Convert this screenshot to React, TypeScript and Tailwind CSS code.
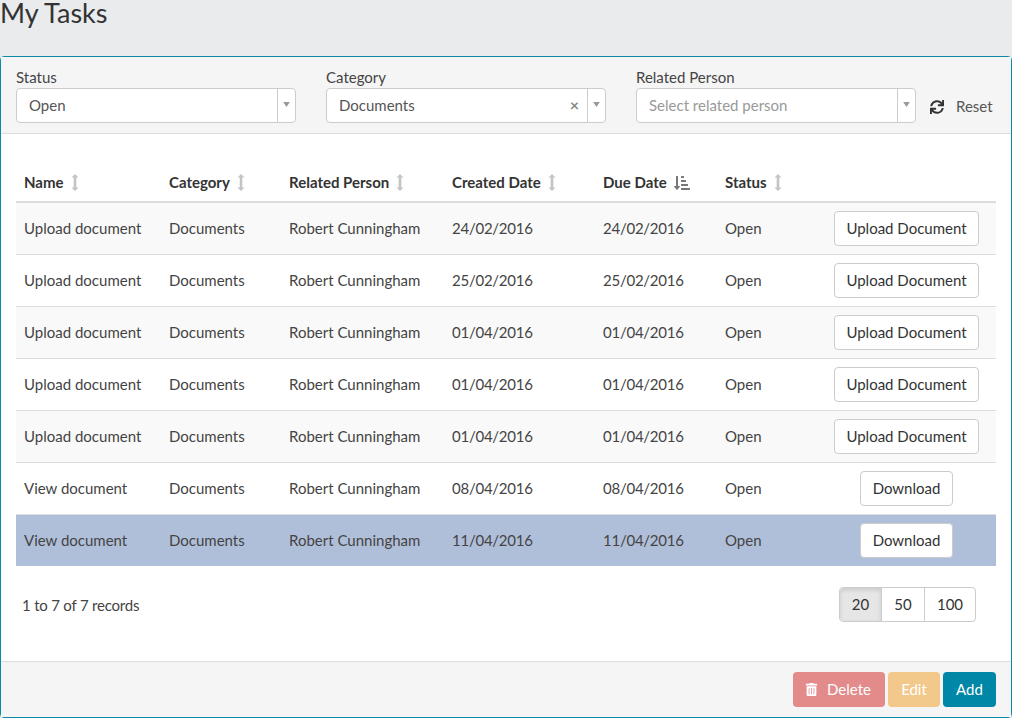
import { FaSortAmountDownAlt, FaSync, FaTrashAlt } from "react-icons/fa";

const rows = [
  { name: "Upload document", created: "24/02/2016", due: "24/02/2016", action: "Upload Document" },
  { name: "Upload document", created: "25/02/2016", due: "25/02/2016", action: "Upload Document" },
  { name: "Upload document", created: "01/04/2016", due: "01/04/2016", action: "Upload Document" },
  { name: "Upload document", created: "01/04/2016", due: "01/04/2016", action: "Upload Document" },
  { name: "Upload document", created: "01/04/2016", due: "01/04/2016", action: "Upload Document" },
  { name: "View document", created: "08/04/2016", due: "08/04/2016", action: "Download" },
  { name: "View document", created: "11/04/2016", due: "11/04/2016", action: "Download" },
];

function SortIcon() {
  return (
    <svg width="8" height="17" viewBox="0 0 8 17" className="ml-[7px] inline-block align-[-3px]" fill="#c4c4c4">
      <path d="M4 0 L7.5 3.5 H5.3 V13.5 H7.5 L4 17 L0.5 13.5 H2.7 V3.5 H0.5 Z" />
    </svg>
  );
}

function Caret() {
  return (
    <div className="flex w-[18px] items-center justify-center self-stretch border-l border-[#ccc]">
      <svg width="7" height="5" viewBox="0 0 8 6" fill="#999" className="-mt-[2px]">
        <path d="M0 0 H8 L4 6 Z" />
      </svg>
    </div>
  );
}

function Select({ label, value, placeholder, clearable }: { label: string; value?: string; placeholder?: string; clearable?: boolean }) {
  return (
    <div className="w-[280px]">
      <div className="h-[21px] leading-[21px] text-[#444]">{label}</div>
      <div className="flex h-[35px] items-center rounded-[4px] border border-[#ccc] bg-white">
        <span className={`flex-1 pl-[12px] ${value ? "text-[#555]" : "text-[#999]"}`}>{value ?? placeholder}</span>
        {clearable && <span className="mr-[8px] -mt-[2px] text-[16px] font-bold leading-none text-[#888]">×</span>}
        <Caret />
      </div>
    </div>
  );
}

export default function App() {
  return (
    <div className="h-[718px] w-[1012px] overflow-hidden bg-[#e9ebed] font-['Lato','Open_Sans',sans-serif] text-[15px] leading-[21px] text-[#444]">
      <h1 className="h-[56px] text-[27px] leading-[26px] text-[#333]">My Tasks</h1>

      <div className="flex h-[662px] flex-col rounded-[4px] border border-[#0a8ba6] bg-white">
        {/* Filters */}
        <div className="flex h-[77px] gap-[30px] border-b border-[#ddd] bg-[#f5f5f5] pl-[15px] pt-[10px]">
          <Select label="Status" value="Open" />
          <Select label="Category" value="Documents" clearable />
          <div className="flex">
            <Select label="Related Person" placeholder="Select related person" />
            <div className="ml-[14px] mt-[29px] flex h-[21px] items-center text-[#555]">
              <FaSync className="text-[14px] text-[#333]" />
              <span className="ml-[12px]">Reset</span>
            </div>
          </div>
        </div>

        {/* Table */}
        <div className="flex-1 px-[15px] pt-[30px]">
          <table className="w-[980px] table-fixed border-collapse">
            <thead>
              <tr className="h-[38px] border-b-2 border-[#ddd] text-left text-[#333]">
                <th className="w-[145px] px-[8px] font-bold">Name<SortIcon /></th>
                <th className="w-[120px] px-[8px] font-bold">Category<SortIcon /></th>
                <th className="w-[163px] px-[8px] font-bold">Related Person<SortIcon /></th>
                <th className="w-[151px] px-[8px] font-bold">Created Date<SortIcon /></th>
                <th className="w-[122px] px-[8px] font-bold">
                  Due Date
                  <FaSortAmountDownAlt className="ml-[7px] inline-block align-[-3px] text-[16px] text-[#777]" />
                </th>
                <th className="w-[100px] px-[8px] font-bold">Status<SortIcon /></th>
                <th />
              </tr>
            </thead>
            <tbody>
              {rows.map((row, index) => (
                <tr
                  key={index}
                  className={`h-[52px] border-t border-[#ddd] first:border-t-0 ${
                    index === 6 ? "bg-[#b0bfd9]" : index % 2 === 0 ? "bg-[#f9f9f9]" : "bg-white"
                  }`}
                >
                  <td className="px-[8px]">{row.name}</td>
                  <td className="px-[8px]">Documents</td>
                  <td className="px-[8px]">Robert Cunningham</td>
                  <td className="px-[8px] tracking-[-0.25px]">{row.created}</td>
                  <td className="px-[8px] tracking-[-0.25px]">{row.due}</td>
                  <td className="px-[8px]">Open</td>
                  <td className="text-center">
                    <button className={`h-[35px] rounded-[4px] border border-[#ccc] bg-white text-[#333] ${row.action === "Download" ? "w-[93px]" : "w-[145px]"}`}>
                      {row.action}
                    </button>
                  </td>
                </tr>
              ))}
            </tbody>
          </table>

          <div className="mt-[21px] flex items-center justify-between pl-[6px] pr-[20px]">
            <span className="pt-[2px] tracking-[-0.2px]">1 to 7 of 7 records</span>
            <div className="flex h-[35px] rounded-[4px] border border-[#ccc] text-[#333]">
              <span className="flex w-[41px] items-center justify-center rounded-l-[4px] bg-[#e6e6e6] shadow-[inset_0_2px_4px_rgba(0,0,0,0.125)]">20</span>
              <span className="flex w-[43px] items-center justify-center border-l border-[#ccc]">50</span>
              <span className="flex w-[51px] items-center justify-center border-l border-[#ccc]">100</span>
            </div>
          </div>
        </div>

        {/* Footer */}
        <div className="flex h-[56px] items-start justify-end gap-[3px] border-t border-[#ddd] bg-[#f5f5f5] pr-[15px] pt-[10px] text-white">
          <button className="flex h-[35px] w-[92px] items-center justify-center rounded-[4px] bg-[#e38b8a] pr-[2px]">
            <FaTrashAlt className="mr-[9px] text-[13px]" />
            Delete
          </button>
          <button className="h-[35px] w-[52px] rounded-[4px] bg-[#f3c88b]">Edit</button>
          <button className="h-[35px] w-[53px] rounded-[4px] bg-[#0086a6]">Add</button>
        </div>
      </div>
    </div>
  );
}
